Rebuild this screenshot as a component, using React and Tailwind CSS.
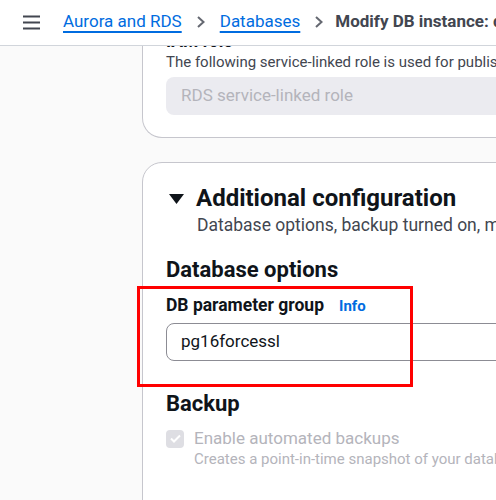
import React from "react";

const Chevron = () => (
  <svg width="10" height="12" viewBox="0 0 10 12" className="shrink-0">
    <path d="M2 1l5.5 5L2 11" fill="none" stroke="#656871" strokeWidth="2" />
  </svg>
);

const Header = () => (
  <header className="relative z-10 h-[46px] shrink-0 bg-white border-b border-[#d1d5db] flex items-center pb-[1px] pl-[23px] gap-[23px] whitespace-nowrap overflow-hidden">
    <svg width="17" height="15" viewBox="0 0 17 15" className="shrink-0">
      <path d="M0 1.5h17M0 7.5h17M0 13.5h17" stroke="#424650" strokeWidth="2.2" />
    </svg>
    <nav className="flex items-center gap-[14px] text-[17px]">
      <a className="text-[#006ce0] underline underline-offset-[4px] decoration-[1.5px]">Aurora and RDS</a>
      <Chevron />
      <a className="text-[#006ce0] underline underline-offset-[4px] decoration-[1.5px]">Databases</a>
      <Chevron />
      <span className="-ml-[3px] font-bold text-[#424650]">Modify DB instance: database-1</span>
    </nav>
  </header>
);

const App = () => {
  return (
    <div
      className="w-[496px] h-[500px] overflow-hidden bg-[#fafafa] flex flex-col"
      style={{ fontFamily: 'Roboto, "Noto Sans", sans-serif' }}
    >
      <Header />
      <div className="flex-1 pl-[142px]">
        {/* IAM role panel, scrolled partly under the header */}
        <section className="-mt-[30px] w-[400px] bg-white border border-t-0 border-[#c6c6cd] rounded-b-[20px] pl-[23px] pt-[14px] pb-[22px] whitespace-nowrap">
          <div className="text-[17.5px] font-bold text-[#0f141a] leading-[23px]">IAM role</div>
          <p className="text-[15px] text-[#424650] leading-[19px]">
            The following service-linked role is used for publishing logs
          </p>
          <div className="mt-[5px] h-[38px] w-[380px] rounded-[8px] bg-[#ebebf0] flex items-center pl-[15px] text-[17px] text-[#b4b4bb]">
            RDS service-linked role
          </div>
        </section>

        {/* Additional configuration panel */}
        <section className="mt-[24px] w-[400px] h-[400px] bg-white border border-[#c6c6cd] rounded-t-[20px] pl-[23px] pt-[20px] whitespace-nowrap">
          <div className="flex items-center gap-[12px] pl-[3px]">
            <svg width="15" height="10" viewBox="0 0 15 10" className="mt-[2px]">
              <path d="M0 0h15L7.5 10z" fill="#0f141a" />
            </svg>
            <h2 className="text-[24px] font-bold text-[#0f141a] leading-[30px]">Additional configuration</h2>
          </div>
          <p className="ml-[31px] text-[17.5px] text-[#424650] leading-[25px]">
            Database options, backup turned on, maintenance
          </p>

          <h3 className="mt-[18px] text-[22px] font-bold text-[#0f141a] leading-[28px]">Database options</h3>

          <div className="relative mt-[9px]">
            <div className="absolute -left-[29px] -top-[7.5px] w-[276px] h-[101px] border-[3px] border-[#ff0000] pointer-events-none" />
            <div className="flex items-baseline gap-[15px] leading-[25px]">
              <span className="text-[17.5px] font-bold text-[#0f141a]">DB parameter group</span>
              <span className="text-[15px] font-bold text-[#006ce0]">Info</span>
            </div>
            <div className="mt-[3.5px] h-[38px] w-[380px] rounded-[8px] border border-[#8c8c94] flex items-center pl-[14px] text-[17px] text-[#0f141a]">
              pg16forcessl
            </div>
          </div>

          <h3 className="mt-[29.5px] text-[22px] font-bold text-[#0f141a] leading-[28px]">Backup</h3>
          <div className="mt-[8.5px] flex items-start gap-[10px]">
            <div className="mt-[3px] w-[18px] h-[18px] rounded-[4px] bg-[#dedee3] flex items-center justify-center shrink-0">
              <svg width="11" height="9" viewBox="0 0 11 9">
                <path d="M1 4.5l3 3 6-6" fill="none" stroke="#fff" strokeWidth="2" />
              </svg>
            </div>
            <div>
              <div className="text-[17px] text-[#b4b4bb] leading-[22px]">Enable automated backups</div>
              <div className="mt-[1px] text-[15px] text-[#b4b4bb] leading-[19px]">
                Creates a point-in-time snapshot of your database
              </div>
            </div>
          </div>
        </section>
      </div>
    </div>
  );
};

export default App;
